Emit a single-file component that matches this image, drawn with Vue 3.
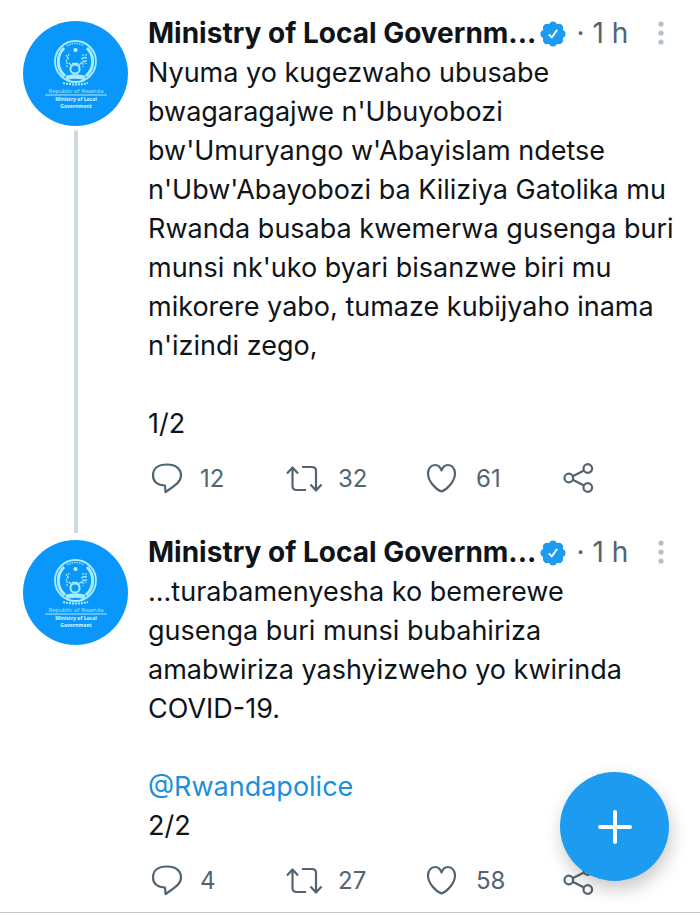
<template>
  <main class="thread">
    <article v-for="(tweet, i) in tweets" :key="tweet.id" class="tweet">
      <div class="side">
        <a class="avatar" href="#" :aria-label="author">
          <svg viewBox="0 0 105 105">
            <circle cx="52.5" cy="52.5" r="52.5" fill="#0a97fb" />
            <g fill="none" stroke="#a9ecfd">
              <circle cx="52.5" cy="40.5" r="20.5" stroke-width="1.8" />
              <path d="M41 27a19 19 0 0 0 1 28M64 27a19 19 0 0 1-1 28" stroke-width="3" />
              <path d="M44 25q8.5-5 17 0" stroke-width="1.2" stroke-dasharray="1.5 1" />
              <circle cx="52" cy="48" r="4.6" stroke-width="2" />
              <path d="M46 42l3 3M58 42l-3 3M49 42.5h6" stroke-width="1.4" />
              <path d="M43 34l3 5M46 33l-3 8M44 41v6M60 33v13M63 33v10M58 38l5-2M58 42l5-2" stroke-width="1.2" stroke-dasharray="2 1" />
              <path d="M43 57q9.5-3 19 0" stroke-width="4.5" />
              <path d="M40 62q12.5 3 25 0" stroke-width="2" stroke-dasharray="2 1" />
            </g>
            <circle cx="52.5" cy="29" r="2" fill="#c8f5ff" />
            <text x="53" y="72" class="seal-light">Republic of Rwanda</text>
            <path d="M22 74h62" stroke="#a9ecfd" stroke-width="1" />
            <text x="53" y="80" class="seal-bold">Ministry of Local</text>
            <text x="53" y="87" class="seal-bold">Government</text>
          </svg>
        </a>
        <div v-if="i < tweets.length - 1" class="connector"></div>
      </div>
      <div class="content">
        <header class="header">
          <span class="name">{{ author }}</span>
          <svg class="badge" viewBox="0 0 26 26" role="img" aria-label="Verified">
            <g fill="#1d9bf0">
              <circle cx="13" cy="13" r="10.5" />
              <circle v-for="n in 8" :key="n" cx="13" cy="4.6" r="4.2" :transform="`rotate(${n * 45} 13 13)`" />
            </g>
            <path d="M8.8 13.4l3 3 5.4-7.5" fill="none" stroke="#fff" stroke-width="1.8" />
          </svg>
          <span class="time"><span>·</span><span>{{ tweet.time }}</span></span>
          <button class="more" type="button" aria-label="More">
            <svg viewBox="0 0 6 26" fill="#b4c0c8">
              <circle cx="3" cy="3" r="2.6" />
              <circle cx="3" cy="12" r="2.6" />
              <circle cx="3" cy="21" r="2.6" />
            </svg>
          </button>
        </header>
        <p class="text">{{ tweet.text }}<a v-if="tweet.mention" href="#" class="mention">{{ tweet.mention }}</a>{{ tweet.page }}</p>
        <div class="actions">
          <button v-for="action in actions" :key="action.key" class="action" type="button" :aria-label="action.label">
            <svg class="icon" viewBox="0 0 36 32">
              <path v-for="d in action.paths" :key="d" :d="d" />
            </svg>
            <span v-if="tweet[action.key]">{{ tweet[action.key] }}</span>
          </button>
        </div>
      </div>
    </article>
    <button class="compose" type="button" aria-label="Compose">
      <svg viewBox="0 0 36 36"><path d="M18 3v30M3 18h30" /></svg>
    </button>
  </main>
</template>

<script setup>
const author = 'Ministry of Local Governm...'

const tweets = [
  {
    id: 1,
    time: '1 h',
    text: `Nyuma yo kugezwaho ubusabe
bwagaragajwe n'Ubuyobozi
bw'Umuryango w'Abayislam ndetse
n'Ubw'Abayobozi ba Kiliziya Gatolika mu
Rwanda busaba kwemerwa gusenga buri
munsi nk'uko byari bisanzwe biri mu
mikorere yabo, tumaze kubijyaho inama
n'izindi zego,

`,
    page: '1/2',
    replies: 12,
    retweets: 32,
    likes: 61
  },
  {
    id: 2,
    time: '1 h',
    text: `...turabamenyesha ko bemerewe
gusenga buri munsi bubahiriza
amabwiriza yashyizweho yo kwirinda
COVID-19.

`,
    mention: '@Rwandapolice',
    page: '\n2/2',
    replies: 4,
    retweets: 27,
    likes: 58
  }
]

const actions = [
  {
    key: 'replies',
    label: 'Reply',
    paths: ['M17 23.5C9.5 23.5 5 19.5 5 13.5 5 6.5 10 2.500 19 2.500s14 4.500 14 11c0 6.500-6 10-15.500 16.500z']
  },
  {
    key: 'retweets',
    label: 'Retweet',
    paths: [
      'M1 11.500l5.500-6 5.500 6M6.500 6v18q0 4 4 4H20',
      'M16 5h10q4 0 4 4v19M24.500 22.500l5.500 6 5.500-6'
    ]
  },
  {
    key: 'likes',
    label: 'Like',
    paths: ['M17.500 29.500C12 27.500 4 19.500 4 11.500 4 6.500 7 3 11 3c3.500 0 5.500 2.500 6.500 5.500 1-3 3-5.500 6.500-5.500 4 0 7 3.500 7 8.500C31 19.500 23 27.500 17.500 29.500z']
  },
  {
    key: 'shares',
    label: 'Share',
    paths: [
      'M2.500 16a4.300 4.300 0 1 0 8.600 0a4.300 4.300 0 1 0-8.600 0',
      'M21.500 6.500a4.300 4.300 0 1 0 8.600 0a4.300 4.300 0 1 0-8.600 0',
      'M21.500 25.500a4.300 4.300 0 1 0 8.600 0a4.300 4.300 0 1 0-8.600 0',
      'M10.700 14.200L22 8.500M10.700 17.800L22 23.500'
    ]
  }
]
</script>

<style>
body {
  margin: 0;
  background: #fff;
}
</style>

<style scoped>
.thread {
  padding-top: 14px;
  border-bottom: 1px solid #c4c8ca;
  color: #0f1419;
  font-family: Inter, Roboto, "Liberation Sans", sans-serif;
  font-size: 27px;
  line-height: 39px;
}

.tweet {
  display: flex;
  gap: 20px;
  padding-left: 23px;
}

.side {
  display: flex;
  flex-direction: column;
  align-items: center;
  flex: none;
  padding-top: 7px;
}

.avatar {
  display: block;
  width: 105px;
  height: 105px;
}

.avatar svg {
  display: block;
}

.seal-light,
.seal-bold {
  text-anchor: middle;
  font-family: "Open Sans", sans-serif;
}

.seal-light {
  font-size: 6px;
  fill: #a9ecfd;
}

.seal-bold {
  font-size: 5px;
  font-weight: 700;
  fill: #dcf8ff;
}

.connector {
  flex: 1;
  width: 4px;
  margin-top: 4px;
  border-radius: 2px 2px 0 0;
  background: #cfd9de;
}

.content {
  flex: 1;
  min-width: 0;
  padding-bottom: 37px;
}

.tweet:last-of-type .content {
  padding-bottom: 14px;
}

.header {
  display: flex;
  align-items: center;
  padding-right: 36px;
  font-size: 28px;
  white-space: nowrap;
}

.name {
  font-weight: 700;
}

.badge {
  width: 26px;
  height: 26px;
  margin: 0 10px 0 4px;
}

.time {
  display: flex;
  gap: 8px;
  color: #536471;
}

button {
  padding: 0;
  border: 0;
  background: none;
  color: inherit;
  font: inherit;
  cursor: pointer;
}

.more {
  display: flex;
  margin-left: auto;
}

.more svg {
  width: 6px;
  height: 26px;
}

.text {
  margin: 0;
  white-space: pre-line;
}

.mention {
  color: #1d8fdc;
  text-decoration: none;
}

.actions {
  display: grid;
  grid-template-columns: repeat(4, 1fr);
  margin-top: 17px;
}

.action {
  display: flex;
  align-items: center;
  gap: 16px;
  height: 36px;
  color: #536471;
  font-size: 24px;
}

.icon {
  width: 36px;
  height: 32px;
  fill: none;
  stroke: currentColor;
  stroke-width: 2.2;
  stroke-linejoin: round;
  overflow: visible;
}

.compose {
  position: fixed;
  right: 31px;
  bottom: 35px;
  display: flex;
  align-items: center;
  justify-content: center;
  width: 109px;
  height: 109px;
  border-radius: 50%;
  background: #1d9bf0;
  box-shadow: 2px 8px 18px rgba(0, 0, 0, 0.22);
}

.compose svg {
  width: 36px;
  height: 36px;
  fill: none;
  stroke: #fff;
  stroke-width: 4;
  stroke-linecap: round;
}
</style>
